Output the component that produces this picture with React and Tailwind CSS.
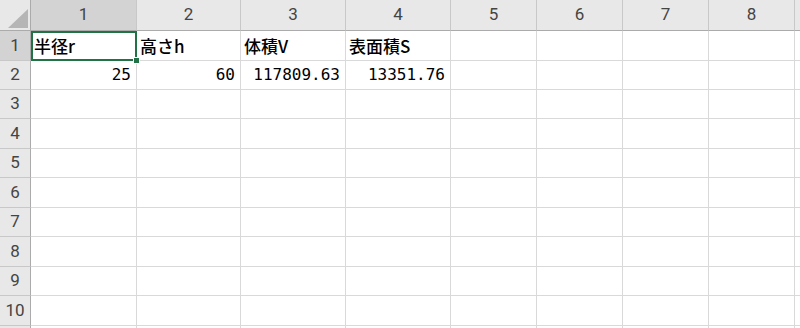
import React from 'react';

const colLabels = ['1', '2', '3', '4', '5', '6', '7', '8', ''];
const rowLabels = ['1', '2', '3', '4', '5', '6', '7', '8', '9', '10', ''];

// sheet contents, keyed by "row-col"
const cells = {
    '0-0': { text: '半径r' },
    '0-1': { text: '高さh' },
    '0-2': { text: '体積V' },
    '0-3': { text: '表面積S' },
    '1-0': { text: '25', num: true },
    '1-1': { text: '60', num: true },
    '1-2': { text: '117809.63', num: true },
    '1-3': { text: '13351.76', num: true },
};

function ColHeader({ label, selected }) {
    return (
        <div
            className={`flex items-center justify-center border-r border-b border-r-[#c8c8c8] border-b-[#ababab] text-[17px] text-[#444] font-['Roboto',sans-serif] ${
                selected ? 'bg-[#d3d3d3]' : 'bg-[#e8e8e8]'
            }`}
        >
            {label}
        </div>
    );
}

function RowHeader({ label, selected }) {
    return (
        <div
            className={`flex items-center justify-center border-r border-b border-r-[#ababab] border-b-[#c8c8c8] text-[17px] text-[#444] font-['Roboto',sans-serif] ${
                selected ? 'bg-[#d3d3d3]' : 'bg-[#e8e8e8]'
            }`}
        >
            {label}
        </div>
    );
}

function Cell({ r, c }) {
    const cell = cells[`${r}-${c}`];
    const active = r === 0 && c === 0;
    return (
        <div className="relative flex items-center border-r border-b border-[#d9d9d9] bg-white overflow-visible">
            {cell && (
                <span
                    className={`w-full whitespace-nowrap text-black ${
                        cell.num
                            ? "text-right pr-[5px] text-[16px] font-['DejaVu_Sans_Mono',monospace]"
                            : "pl-[3px] text-[17px] font-medium font-['Noto_Sans_CJK_JP',sans-serif]"
                    }`}
                >
                    {cell.text}
                </span>
            )}
            {active && (
                <>
                    <div className="absolute left-0 top-0 right-[-1px] bottom-[-1px] border-2 border-[#217346] z-10" />
                    <div className="absolute right-[-4px] bottom-[-4px] w-[7px] h-[7px] bg-[#217346] border border-white z-20" />
                </>
            )}
        </div>
    );
}

export default function App() {
    return (
        <div className="w-[800px] h-[328px] overflow-hidden bg-white">
            <div className="grid grid-cols-[31px_106px_104px_105px_105px_86px_86px_86px_86px_40px] grid-rows-[31px_30px_29px_29px_30px_29px_30px_29px_30px_29px_30px_30px]">
                {/* corner */}
                <div className="relative bg-[#e8e8e8] border-r border-b border-r-[#ababab] border-b-[#ababab]">
                    <svg className="absolute left-[8px] top-[9px]" width="20" height="19" viewBox="0 0 20 19">
                        <polygon points="20,0 20,19 0,19" fill="#b5b5b5" />
                    </svg>
                </div>
                {colLabels.map((label, i) => (
                    <ColHeader key={`h${i}`} label={label} selected={i === 0} />
                ))}

                {rowLabels.map((label, r) => (
                    <React.Fragment key={`r${r}`}>
                        <RowHeader label={label} selected={r === 0} />
                        {colLabels.map((_, c) => (
                            <Cell key={`c${r}-${c}`} r={r} c={c} />
                        ))}
                    </React.Fragment>
                ))}
            </div>
        </div>
    );
}
